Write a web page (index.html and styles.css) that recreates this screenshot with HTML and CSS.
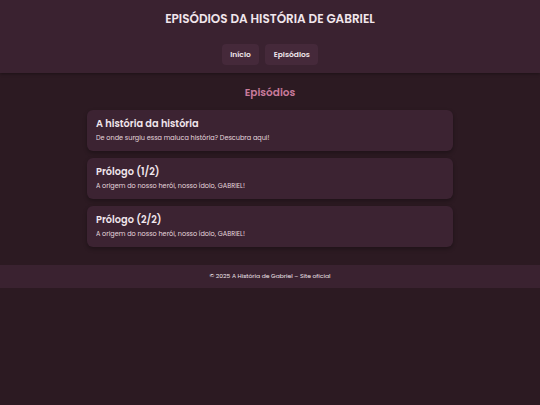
FILE: index.html
```html
<!DOCTYPE html>
<html lang="pt-BR">
<head>
<meta charset="utf-8">
<title>Episódios da História de Gabriel</title>
<link rel="stylesheet" href="styles.css">
</head>
<body>
<header class="site-header">
  <h1 class="site-title">EPISÓDIOS DA HISTÓRIA DE GABRIEL</h1>
  <nav class="nav">
    <a class="nav-btn" href="#">Início</a>
    <a class="nav-btn" href="#">Episódios</a>
  </nav>
</header>
<main class="main">
  <h2 class="section-title">Episódios</h2>
  <div class="cards">
    <article class="card">
      <h3 class="card-title">A história da história</h3>
      <p class="card-text">De onde surgiu essa maluca história? Descubra aqui!</p>
    </article>
    <article class="card">
      <h3 class="card-title">Prólogo (1/2)</h3>
      <p class="card-text">A origem do nosso herói, nosso ídolo, GABRIEL!</p>
    </article>
    <article class="card">
      <h3 class="card-title">Prólogo (2/2)</h3>
      <p class="card-text">A origem do nosso herói, nosso ídolo, GABRIEL!</p>
    </article>
  </div>
</main>
<footer class="site-footer">© 2025 A História de Gabriel – Site oficial</footer>
</body>
</html>
```

FILE: styles.css
```css
* { box-sizing: border-box; }
html, body {
  margin: 0;
  padding: 0;
  background: #2c1a22;
  color: #f1e6ec;
  font-family: "Poppins", "Open Sans", "Noto Sans", sans-serif;
}
.site-header {
  background: #3a2230;
  padding: 10px 0 8px;
  display: flex;
  flex-direction: column;
  align-items: center;
  box-shadow: 0 1px 3px rgba(0,0,0,0.35);
}
.site-title {
  margin: 0;
  font-size: 12px;
  font-weight: 600;
  line-height: 17px;
}
.nav {
  display: flex;
  gap: 6px;
  margin-top: 17px;
}
.nav-btn {
  display: block;
  background: #45293a;
  color: #f1e6ec;
  text-decoration: none;
  font-size: 7.5px;
  font-weight: 600;
  padding: 0 8.5px;
  height: 21px;
  line-height: 21px;
  border-radius: 4px;
}
.main {
  width: 366px;
  margin: 0 auto;
  padding: 12px 0 18px;
}
.section-title {
  margin: 0 0 9px;
  text-align: center;
  color: #c97b9c;
  font-size: 10.5px;
  font-weight: 600;
  line-height: 16px;
}
.cards {
  display: flex;
  flex-direction: column;
  gap: 7px;
}
.card {
  background: #3c2332;
  border-radius: 6px;
  padding: 7px 9px 8px;
  height: 41px;
  box-shadow: 0 2px 4px rgba(0,0,0,0.3);
}
.card-title {
  margin: 0;
  font-size: 9.75px;
  font-weight: 600;
  line-height: 14px;
}
.card-text {
  margin: 2px 0 0;
  font-size: 6.5px;
  font-weight: 400;
  color: #e6d8df;
  line-height: 10px;
}
.site-footer {
  background: #3a2230;
  height: 23px;
  line-height: 23px;
  text-align: center;
  font-size: 6px;
}
```
